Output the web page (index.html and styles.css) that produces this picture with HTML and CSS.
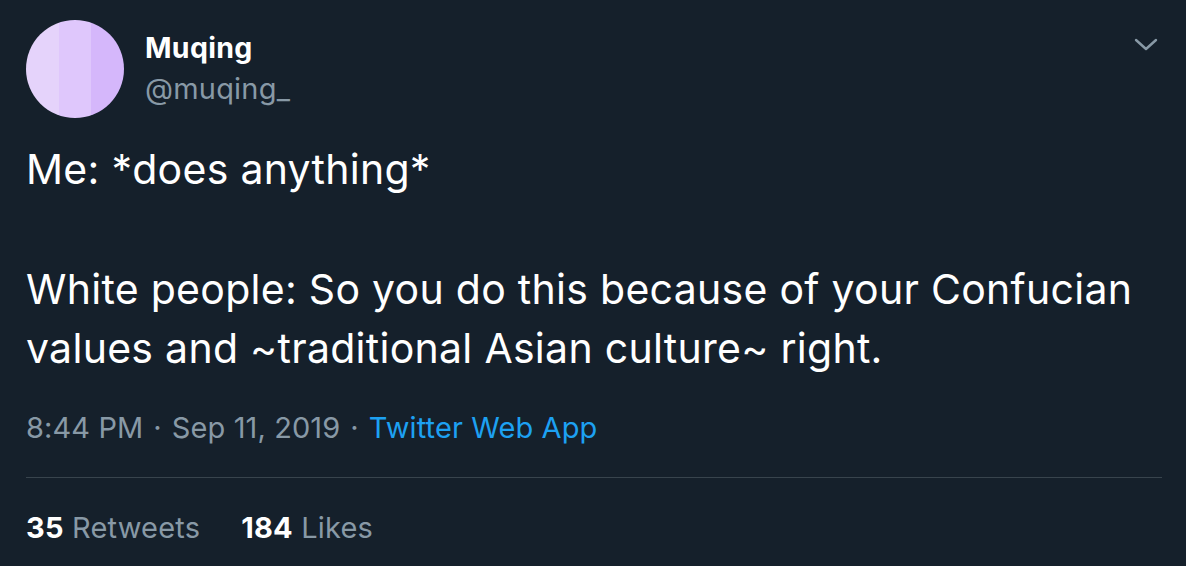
FILE: index.html
```html
<!DOCTYPE html>
<html>
<head>
<meta charset="utf-8">
<link rel="stylesheet" href="styles.css">
</head>
<body>
<div class="tweet">
  <div class="header">
    <div class="avatar"><span class="s1"></span><span class="s2"></span><span class="s3"></span></div>
    <div class="names">
      <div class="name">Muqing</div>
      <div class="handle">@muqing_</div>
    </div>
    <svg class="chevron" width="24" height="14" viewBox="0 0 24 14"><path d="M2 2 L12 11 L22 2" fill="none" stroke="#8899a6" stroke-width="2.4" stroke-linecap="round" stroke-linejoin="round"/></svg>
  </div>
  <div class="text">
    <p>Me: *does anything*</p>
    <p class="gap">White people: So you do this because of your Confucian values and ~traditional Asian culture~ right.</p>
  </div>
  <div class="meta"><span>8:44 PM</span><span class="dot">·</span><span>Sep 11, 2019</span><span class="dot">·</span><span class="link">Twitter Web App</span></div>
  <div class="stats"><span class="stat"><b>35</b> Retweets</span><span class="stat"><b>184</b> Likes</span></div>
</div>
</body>
</html>
```
FILE: styles.css
```css
html, body { margin: 0; background: #15202b; }
body { font-family: Inter, "Noto Sans", "Liberation Sans", sans-serif; color: #ffffff; width: 1186px; height: 566px; overflow: hidden; }
.tweet { padding: 20px 24px 0 26px; }
.header { display: flex; align-items: flex-start; }
.avatar { width: 98px; height: 98px; border-radius: 50%; overflow: hidden; display: flex; flex: none; }
.avatar span { flex: 1; }
.s1 { background: #e5d3fb; }
.s2 { background: #dfc7fc; }
.s3 { background: #d5b7fb; }
.names { margin-left: 21px; padding-top: 11px; }
.name { font-weight: 700; font-size: 28.5px; line-height: 34px; letter-spacing: 0.3px; }
.handle { color: #8899a6; font-size: 29px; line-height: 34px; margin-top: 7px; letter-spacing: 0.2px; }
.chevron { margin-left: auto; margin-top: 18px; margin-right: 4px; }
.text { font-size: 41px; line-height: 59px; margin-top: 22px; letter-spacing: 0.28px; }
.text p { margin: 0; }
.text .gap { margin-top: 61px; }
.meta { color: #8899a6; font-size: 29px; line-height: 36px; margin-top: 32px; letter-spacing: 0.1px; }
.dot { margin: 0 10px; }
.link { color: #1da1f2; }
.stats { border-top: 1px solid #38444d; margin-top: 31px; padding-top: 30px; font-size: 29px; line-height: 40px; color: #8899a6; width: 1136px; letter-spacing: 0.2px; }
.stat { margin-right: 41px; }
.stat b { color: #ffffff; font-weight: 700; }
```
